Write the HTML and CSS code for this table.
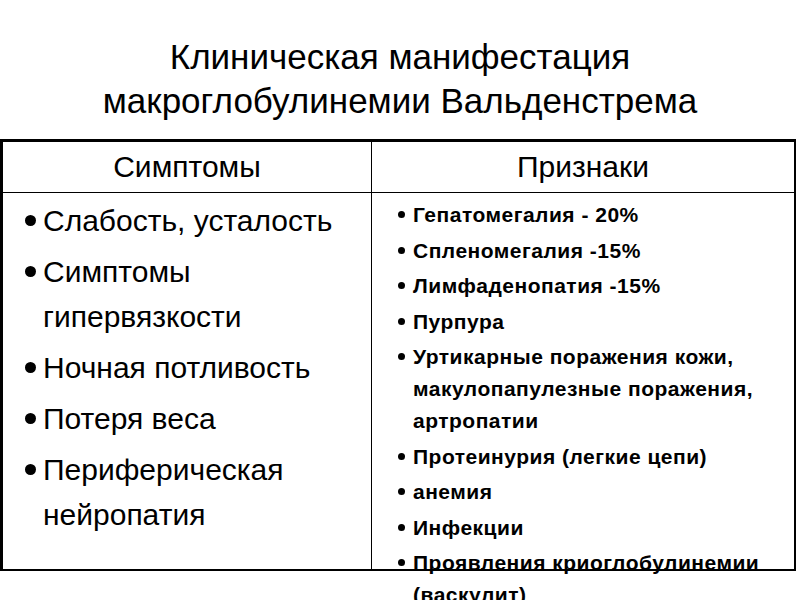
FILE: index.html
```html
<!DOCTYPE html>
<html lang="ru">
<head>
<meta charset="utf-8">
<title>Клиническая манифестация макроглобулинемии Вальденстрема</title>
<link rel="stylesheet" href="styles.css">
</head>
<body>
<h1 class="title">Клиническая манифестация<br>макроглобулинемии Вальденстрема</h1>
<div class="table">
  <div class="head head-left">Симптомы</div>
  <div class="head head-right">Признаки</div>
  <div class="cell cell-left">
    <ul class="list list-big">
      <li>Слабость, усталость</li>
      <li>Симптомы гипервязкости</li>
      <li>Ночная потливость</li>
      <li>Потеря веса</li>
      <li>Периферическая нейропатия</li>
    </ul>
  </div>
  <div class="cell cell-right">
    <ul class="list list-small">
      <li>Гепатомегалия - 20%</li>
      <li>Спленомегалия -15%</li>
      <li>Лимфаденопатия -15%</li>
      <li>Пурпура</li>
      <li>Уртикарные поражения кожи, макулопапулезные поражения, артропатии</li>
      <li>Протеинурия (легкие цепи)</li>
      <li>анемия</li>
      <li>Инфекции</li>
      <li>Проявления криоглобулинемии (васкулит)</li>
    </ul>
  </div>
</div>
</body>
</html>
```

FILE: styles.css
```css
html, body {
  margin: 0;
  padding: 0;
  background: #fff;
}
body {
  width: 800px;
  height: 600px;
  overflow: hidden;
  font-family: "Liberation Sans", Arial, sans-serif;
  color: #000;
}
.title {
  margin: 0;
  padding-top: 35px;
  height: 139px;
  box-sizing: border-box;
  font-weight: normal;
  font-size: 35px;
  line-height: 44px;
  text-align: center;
}
.table {
  box-sizing: border-box;
  width: 796px;
  height: 432px;
  border-top: 3px solid #000;
  border-left: 3px solid #000;
  border-right: 2px solid #000;
  border-bottom: 2px solid #000;
  display: grid;
  grid-template-columns: 369px 1fr;
  grid-template-rows: 51px 1fr;
}
.head {
  box-sizing: border-box;
  border-bottom: 1px solid #000;
  font-size: 30px;
  line-height: 50px;
  text-align: center;
}
.head-left,
.cell-left {
  border-right: 1px solid #000;
}
.cell {
  box-sizing: border-box;
  min-height: 0;
}
.cell-left {
  padding-top: 5px;
}
.cell-right {
  padding-top: 6px;
}
.list {
  list-style: none;
  margin: 0;
  padding: 0;
}
.list li::before {
  content: "";
  display: inline-block;
  border-radius: 50%;
  background: #000;
}
.list-big li {
  font-size: 30px;
  line-height: 45px;
  margin-bottom: 6px;
  padding-left: 40px;
  padding-right: 4px;
}
.list-big li::before {
  width: 11px;
  height: 11px;
  margin-left: -18px;
  margin-right: 7px;
  vertical-align: 5px;
}
.list-small li {
  font-size: 21px;
  font-weight: bold;
  letter-spacing: 0.5px;
  line-height: 32px;
  margin-bottom: 3.5px;
  padding-left: 41px;
  padding-right: 8px;
}
.list-small li::before {
  width: 7px;
  height: 7px;
  margin-left: -15px;
  margin-right: 8px;
  vertical-align: 4px;
}
```
